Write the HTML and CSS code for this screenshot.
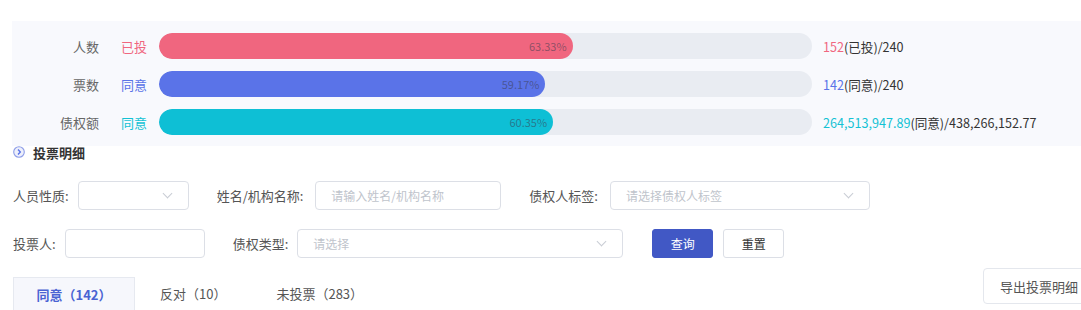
FILE: index.html
```html
<!DOCTYPE html>
<html lang="zh-CN">
<head>
  <meta charset="UTF-8" />
  <title>投票统计</title>
  <link rel="stylesheet" href="styles.css">
</head>
<body>
  <div class="stats">
    <div class="stat-row">
      <div class="stat-name">人数</div>
      <div class="stat-tag pink">已投</div>
      <div class="track"><div class="fill pink-bg" style="width: 63.33%">63.33%</div></div>
      <div class="stat-value"><span class="pink">152</span>(已投)/240</div>
    </div>
    <div class="stat-row">
      <div class="stat-name">票数</div>
      <div class="stat-tag blue">同意</div>
      <div class="track"><div class="fill blue-bg" style="width: 59.17%">59.17%</div></div>
      <div class="stat-value"><span class="blue">142</span>(同意)/240</div>
    </div>
    <div class="stat-row">
      <div class="stat-name">债权额</div>
      <div class="stat-tag cyan">同意</div>
      <div class="track"><div class="fill cyan-bg" style="width: 60.35%">60.35%</div></div>
      <div class="stat-value"><span class="cyan">264,513,947.89</span>(同意)/438,266,152.77</div>
    </div>
  </div>

  <div class="section-title">
    <svg class="title-icon" width="12" height="12" viewBox="0 0 12 12">
      <circle cx="6" cy="6" r="5.3" fill="#eef0fb" stroke="#8d9de8" stroke-width="1.1"/>
      <path d="M5 3.6 L7.3 6 L5 8.4" fill="none" stroke="#5a73e8" stroke-width="1.4"/>
    </svg>
    <span>投票明细</span>
  </div>

  <div class="filter-row">
    <label class="f-label">人员性质:</label>
    <div class="field select w-111"><span class="ph"></span><span class="chev"></span></div>
    <label class="f-label gap wide">姓名/机构名称:</label>
    <div class="field w-186"><span class="ph">请输入姓名/机构名称</span></div>
    <label class="f-label gap wide">债权人标签:</label>
    <div class="field select w-260"><span class="ph">请选择债权人标签</span><span class="chev"></span></div>
  </div>

  <div class="filter-row row-2">
    <label class="f-label">投票人:</label>
    <div class="field w-140"><span class="ph"></span></div>
    <label class="f-label gap">债权类型:</label>
    <div class="field select w-326"><span class="ph">请选择</span><span class="chev"></span></div>
    <button class="btn btn-primary">查询</button>
    <button class="btn">重置</button>
  </div>

  <div class="tab-row">
    <div class="tabs">
      <div class="tab active">同意（142）</div>
      <div class="tab">反对（10）</div>
      <div class="tab">未投票（283）</div>
    </div>
    <button class="export">导出投票明细</button>
  </div>
</body>
</html>
```

FILE: styles.css
```css
body {
  margin: 0;
  font-family: "Noto Sans CJK SC", "Noto Sans", sans-serif;
  font-size: 13px;
  color: #333;
  background: #fff;
  overflow: hidden;
  width: 1081px;
  height: 310px;
}
.stats {
  margin: 21px 0 0 12px;
  padding: 12px 0 11px;
  background: #f8f9fd;
  display: flex;
  flex-direction: column;
  gap: 12px;
}
.stat-row {
  display: flex;
  align-items: center;
  height: 26px;
}
.stat-name {
  width: 87px;
  text-align: right;
  color: #666;
}
.stat-tag {
  margin-left: 22px;
  width: 38px;
}
.pink { color: #f0667f; }
.blue { color: #5a73e8; }
.cyan { color: #13c2d4; }
.pink-bg { background: #f0667f; }
.blue-bg { background: #5a73e8; }
.cyan-bg { background: #0ebfd5; }
.track {
  width: 653px;
  height: 26px;
  border-radius: 13px;
  background: #e9ecf2;
  overflow: hidden;
}
.fill {
  height: 100%;
  border-radius: 13px;
  box-sizing: border-box;
  padding-right: 6px;
  text-align: right;
  font-size: 11px;
  line-height: 26px;
  color: rgba(60, 60, 80, 0.55);
}
.stat-value {
  margin-left: 11px;
  font-size: 12.6px;
  color: #333;
}
.section-title {
  display: flex;
  align-items: center;
  margin: -2px 0 0 13px;
  height: 16px;
  font-weight: bold;
  font-size: 13px;
  color: #333;
}
.title-icon {
  margin-right: 8px;
}
.filter-row {
  display: flex;
  align-items: center;
  margin: 21px 0 0 13px;
}
.row-2 {
  margin-top: 19px;
}
.f-label {
  color: #555;
  margin-right: 9px;
  white-space: nowrap;
}
.f-label.gap {
  margin-left: 28px;
}
.f-label.wide {
  margin-right: 12px;
}
.field {
  height: 29px;
  box-sizing: border-box;
  border: 1px solid #dcdfe6;
  border-radius: 4px;
  background: #fff;
  display: flex;
  align-items: center;
  justify-content: space-between;
  padding: 0 15px;
}
.ph {
  font-size: 12px;
  color: #c0c4cc;
}
.chev {
  width: 6px;
  height: 6px;
  border-right: 1px solid #c8ccd4;
  border-bottom: 1px solid #c8ccd4;
  transform: rotate(45deg);
  margin: -4px 2px 0 0;
}
.w-111 { width: 111px; }
.w-140 { width: 140px; }
.w-186 { width: 186px; }
.w-260 { width: 260px; }
.w-326 { width: 326px; }
.btn {
  width: 61px;
  height: 29px;
  border: 1px solid #dcdfe6;
  border-radius: 3px;
  background: #fff;
  color: #333;
  font-family: inherit;
  font-size: 12px;
  margin-left: 10px;
}
.btn-primary {
  margin-left: 29px;
  background: #4158c5;
  border-color: #4158c5;
  color: #fff;
}
.tab-row {
  display: flex;
  justify-content: space-between;
  align-items: flex-end;
  margin: 10px 0 0 0;
  padding-left: 13px;
  width: 1100px;
  height: 42px;
  border-bottom: 1px solid #e8ebf2;
}
.tabs {
  display: flex;
  align-items: flex-end;
  margin-bottom: -1px;
}
.tab {
  height: 34px;
  line-height: 34px;
  padding: 0 25px;
  color: #555;
}
.tab.active {
  width: 122px;
  box-sizing: border-box;
  text-align: center;
  padding: 0;
  background: #f6f7fc;
  border: 1px solid #e6e9f0;
  border-bottom: none;
  color: #4a63d3;
  font-weight: bold;
}
.export {
  margin: 0 20px 6px 0;
  height: 36px;
  width: 110px;
  padding: 0 0 0 16px;
  text-align: left;
  border: 1px solid #e4e7ed;
  border-radius: 4px;
  background: #fff;
  color: #555;
  font-family: inherit;
  font-size: 13px;
}
```
